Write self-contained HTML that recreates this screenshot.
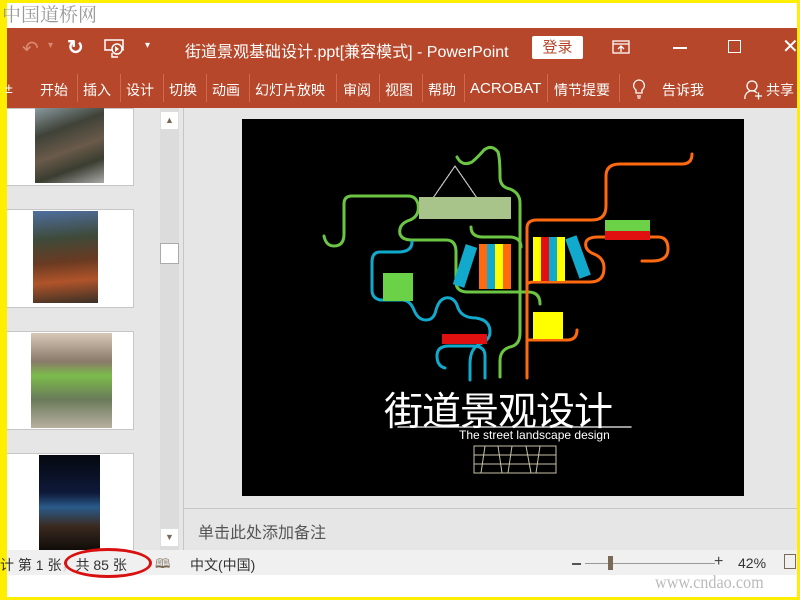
<!DOCTYPE html>
<html><head><meta charset="utf-8"><style>
*{margin:0;padding:0;box-sizing:border-box}
body{width:800px;height:600px;background:#fff;position:relative;overflow:hidden;font-family:"Liberation Sans","Noto Sans CJK SC",sans-serif}
.a{position:absolute}
.t{color:#fff;font-size:14px;white-space:nowrap}
.sep{position:absolute;top:74px;width:1px;height:28px;background:#d06a4e}
</style></head><body>
<div class="a" style="left:0;top:0;width:800px;height:600px;border:3px solid #ffee00;border-left-width:7px"></div>
<div class="a" style="left:2px;top:0;font-size:19px;color:#999;font-family:'Noto Serif CJK SC',serif;letter-spacing:0px">中国道桥网</div>
<div class="a" style="left:7px;top:28px;width:790px;height:80px;background:#b7472a"></div>
<div class="a t" style="left:22px;top:36px;font-size:20px;color:#d98a74">↶</div>
<div class="a t" style="left:48px;top:40px;font-size:10px;color:#d98a74">▾</div>
<div class="a t" style="left:67px;top:35px;font-size:20px;font-weight:bold">↻</div>
<svg class="a" style="left:104px;top:39px" width="22" height="20"><rect x="1" y="1" width="18" height="10" fill="none" stroke="#fff" stroke-width="1.5"/><circle cx="13" cy="10" r="5" fill="#b7472a" stroke="#fff" stroke-width="1.5"/><path d="M11 7l4 3-4 3z" fill="#fff"/><path d="M8 14v4h6" stroke="#fff" stroke-width="1.5" fill="none"/></svg>
<div class="a t" style="left:145px;top:40px;font-size:10px">▾</div>
<div class="a t" style="left:185px;top:38px;font-size:16px">街道景观基础设计.ppt[兼容模式] - PowerPoint</div>
<div class="a" style="left:532px;top:36px;width:51px;height:23px;background:#fff;border-radius:2px;color:#b7472a;font-size:15px;text-align:center;line-height:23px">登录</div>
<svg class="a" style="left:612px;top:40px" width="18" height="15"><rect x="1" y="1" width="16" height="12" fill="none" stroke="#fff" stroke-width="1.3"/><path d="M1 4h16M9 12V6M6 9l3-3 3 3" stroke="#fff" stroke-width="1.3" fill="none"/></svg>
<div class="a" style="left:673px;top:47px;width:14px;height:1.5px;background:#fff"></div>
<div class="a" style="left:728px;top:40px;width:13px;height:13px;border:1.5px solid #fff"></div>
<div class="a t" style="left:782px;top:34px;font-size:20px">✕</div>
<div class="a t" style="left:5px;top:80px">±</div>
<div class="a t" style="left:40px;top:80px">开始</div><div class="sep" style="left:77px"></div>
<div class="a t" style="left:83px;top:80px">插入</div><div class="sep" style="left:120px"></div>
<div class="a t" style="left:126px;top:80px">设计</div><div class="sep" style="left:163px"></div>
<div class="a t" style="left:169px;top:80px">切换</div><div class="sep" style="left:206px"></div>
<div class="a t" style="left:212px;top:80px">动画</div><div class="sep" style="left:249px"></div>
<div class="a t" style="left:255px;top:80px">幻灯片放映</div><div class="sep" style="left:336px"></div>
<div class="a t" style="left:343px;top:80px">审阅</div><div class="sep" style="left:379px"></div>
<div class="a t" style="left:385px;top:80px">视图</div><div class="sep" style="left:422px"></div>
<div class="a t" style="left:428px;top:80px">帮助</div><div class="sep" style="left:464px"></div>
<div class="a t" style="left:470px;top:80px;font-size:15px">ACROBAT</div><div class="sep" style="left:547px"></div>
<div class="a t" style="left:554px;top:80px">情节提要</div><div class="sep" style="left:619px"></div>
<svg class="a" style="left:632px;top:78px" width="14" height="22"><path d="M7 2a5.5 5.5 0 0 0-3 10v3h6v-3a5.5 5.5 0 0 0-3-10z" fill="none" stroke="#fff" stroke-width="1.3"/><path d="M5 18h4M5.5 20h3" stroke="#fff" stroke-width="1.3"/></svg>
<div class="a t" style="left:662px;top:80px">告诉我</div>
<svg class="a" style="left:744px;top:79px" width="20" height="22"><circle cx="8" cy="7" r="5" fill="none" stroke="#fff" stroke-width="1.3"/><path d="M1 20a7 7 0 0 1 12-6M11 17h7M14.5 13.5v7" stroke="#fff" stroke-width="1.3" fill="none"/></svg>
<div class="a t" style="left:766px;top:80px">共享</div>
<div class="a" style="left:7px;top:108px;width:790px;height:442px;background:#e6e6e6"></div>
<div class="a" style="left:7px;top:108px;width:127px;height:78px;background:#fff;border:1px solid #c6c6c6;border-left:0"></div>
<div class="a" style="left:35px;top:108px;width:69px;height:75px;background:linear-gradient(160deg,#8a9aa0,#3f4238 30%,#6a5a4a 55%,#3a3d30 75%,#aaa 100%)"></div>
<div class="a" style="left:7px;top:209px;width:127px;height:99px;background:#fff;border:1px solid #c6c6c6;border-left:0"></div>
<div class="a" style="left:33px;top:211px;width:65px;height:92px;background:linear-gradient(175deg,#4f6f9f,#3e4a3a 30%,#6a3a22 55%,#b0542a 75%,#3a3025)"></div>
<div class="a" style="left:7px;top:331px;width:127px;height:99px;background:#fff;border:1px solid #c6c6c6;border-left:0"></div>
<div class="a" style="left:31px;top:333px;width:81px;height:95px;background:linear-gradient(180deg,#d8c8b8,#8a7a6a 30%,#7bbb4a 45%,#6a7a5a 70%,#b8b0a0)"></div>
<div class="a" style="left:7px;top:453px;width:127px;height:97px;background:#fff;border:1px solid #c6c6c6;border-left:0;border-bottom:0"></div>
<div class="a" style="left:39px;top:455px;width:61px;height:95px;background:linear-gradient(180deg,#05080f,#0f1a3a 40%,#2a5a8a 55%,#3a2a20 75%,#100c08)"></div>
<div class="a" style="left:160px;top:108px;width:19px;height:442px;background:#dcdcdc"></div>
<div class="a" style="left:160px;top:111px;width:19px;height:19px;background:#fff;border:1px solid #ddd;color:#7a6a55;font-size:9px;text-align:center;line-height:17px">▲</div>
<div class="a" style="left:160px;top:243px;width:19px;height:21px;background:#fff;border:1px solid #aaa"></div>
<div class="a" style="left:160px;top:528px;width:19px;height:19px;background:#fff;border:1px solid #ddd;color:#7a6a55;font-size:9px;text-align:center;line-height:17px">▼</div>
<div class="a" style="left:183px;top:108px;width:1px;height:442px;background:#c6c6c6"></div>
<div class="a" style="left:184px;top:508px;width:613px;height:1px;background:#c6c6c6"></div>
<div class="a" style="left:198px;top:519px;font-size:16px;color:#555">单击此处添加备注</div>
<div class="a" style="left:242px;top:119px;width:502px;height:377px;background:#000"></div>
<svg class="a" style="left:0;top:0" width="800" height="600" fill="none" stroke-width="3" stroke-linecap="round">
<path d="M324 236q2 10 10 10q10 0 10-12v-30q0-8 8-8h56q8 0 10 8q2 12-8 16q-12 4-10 14q2 6 12 6h34q10 0 10 12v30q0 10 12 10h60q12 0 12 12" stroke="#6cc644"/>
<path d="M457 157q5 10 15 5q6-5 12-12q8-6 14 2q2 6 2 25q0 10 10 12q10 4 10 14v130q0 12-10 14q-10 3-10 14v16" stroke="#6cc644"/>
<path d="M471 227q0 10 12 10h26q12 0 12 10" stroke="#6cc644"/>
<path d="M412 242q0 10-14 10h-18q-8 0-8 10v28q0 8 8 10h22q8 0 12 10q4 10 12 10q8 0 10-10q4-14 14-12q6 2 8 10q4 10 18 10q14 2 14 14q0 8-10 12q-10 4-10 20v16" stroke="#11aacc"/>
<path d="M445 368q-8-2-8-12q0-10 12-10h24q12 0 12 10v22" stroke="#11aacc"/>
<path d="M527 378v-150q0-8 10-8h55q14 0 14-14v-30q0-12 14-12h62q10 0 10-10" stroke="#ff6a10"/>
<path d="M527 285q0-3 8-3h55q14 0 14-14q0-10-10-14q-10-4-8-12q2-5 12-5h60q10 0 10 12q0 12-16 12h-10" stroke="#ff6a10"/>
<path d="M527 340h40q10 0 10-10" stroke="#ff6a10"/>
<path d="M433 198l22-32l22 32" stroke="#ccc" stroke-width="1.2" stroke-dasharray="2 1"/>
<rect x="419" y="197" width="92" height="22" fill="#a8c48a" stroke="none"/>
<rect x="383" y="273" width="30" height="28" fill="#6bd147" stroke="none"/>
<rect x="442" y="334" width="45" height="10" fill="#e01010" stroke="none"/>
<rect x="533" y="312" width="30" height="27" fill="#ffff00" stroke="none"/>
<rect x="605" y="220" width="45" height="11" fill="#6bd147" stroke="none"/>
<rect x="605" y="231" width="45" height="9" fill="#e01010" stroke="none"/>
<rect x="459" y="245" width="12" height="42" fill="#11aacc" stroke="none" transform="rotate(18 465 266)"/>
<rect x="479" y="244" width="8" height="45" fill="#ff6a10" stroke="none"/>
<rect x="487" y="244" width="8" height="45" fill="#11aacc" stroke="none"/>
<rect x="495" y="244" width="8" height="45" fill="#ffff00" stroke="none"/>
<rect x="503" y="244" width="8" height="45" fill="#ff6a10" stroke="none"/>
<rect x="533" y="237" width="8" height="44" fill="#ffff00" stroke="none"/>
<rect x="541" y="237" width="8" height="44" fill="#e01010" stroke="none"/>
<rect x="549" y="237" width="8" height="44" fill="#11aacc" stroke="none"/>
<rect x="557" y="237" width="8" height="44" fill="#ffff00" stroke="none"/>
<rect x="572" y="236" width="12" height="42" fill="#11aacc" stroke="none" transform="rotate(-20 578 257)"/>
<path d="M398 427h233" stroke="#ccc" stroke-width="1.5"/>
<g stroke="#c8bfa8" stroke-width="1"><rect x="474" y="446" width="82" height="27"/><path d="M474 455h82M474 464h82M485 446l-4 27M498 446l4 27M512 446l-4 27M526 446l5 27M540 446l-4 27"/></g>
</svg>
<div class="a" style="left:384px;top:381px;font-size:39px;color:#fff;letter-spacing:-1px;white-space:nowrap">街道景观设计</div>
<div class="a" style="left:459px;top:428px;font-size:12px;color:#fff;white-space:nowrap">The street landscape design</div>
<div class="a" style="left:7px;top:550px;width:790px;height:25px;background:#f0f0f0"></div>
<div class="a" style="left:0;top:555px;font-size:14px;color:#333;white-space:nowrap">计 第 1 张<span style="color:#ccc">，</span>共 85 张</div>
<div class="a" style="left:64px;top:548px;width:88px;height:30px;border:3px solid #d81010;border-radius:50%"></div>
<div class="a" style="left:155px;top:555px;font-size:13px;color:#7a6a55">🕮</div>
<div class="a" style="left:190px;top:555px;font-size:14px;color:#333">中文(中国)</div>
<div class="a" style="left:572px;top:563px;width:9px;height:1.5px;background:#555"></div>
<div class="a" style="left:585px;top:563px;width:130px;height:1px;background:#999"></div>
<div class="a" style="left:608px;top:556px;width:5px;height:14px;background:#7a6a55"></div>
<div class="a" style="left:714px;top:553px;font-size:16px;color:#444">+</div>
<div class="a" style="left:738px;top:555px;font-size:14px;color:#333">42%</div>
<div class="a" style="left:784px;top:554px;width:12px;height:15px;border:1px solid #7a6a55"></div>
<div class="a" style="left:655px;top:572px;font-size:18px;color:#bbb;font-family:'Liberation Serif',serif;letter-spacing:0px;transform:scaleX(0.9);transform-origin:left">www.cndao.com</div>
</body></html>
